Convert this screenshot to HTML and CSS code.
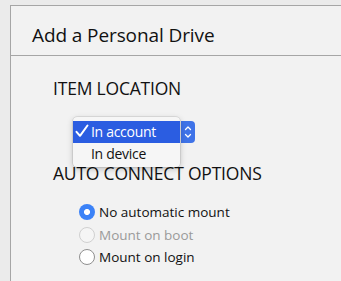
FILE: index.html
```html
<!DOCTYPE html>
<html>
<head>
<meta charset="utf-8">
<link rel="stylesheet" href="styles.css">
</head>
<body>
<div class="panel">
  <div class="header"><h1 class="title">Add a Personal Drive</h1></div>
  <div class="content">
    <div class="section-label">ITEM LOCATION</div>
    <div class="select-row">
      <div class="menu">
        <div class="menu-item selected"><svg class="check" width="14" height="14" viewBox="0 0 14 14"><path d="M1.5 7.8 L5 11.8 L12.5 1.5" fill="none" stroke="#fff" stroke-width="2" stroke-linecap="round" stroke-linejoin="round"/></svg>In account</div>
        <div class="menu-item">In device</div>
      </div>
      <div class="stepper">
        <svg width="14" height="22" viewBox="0 0 14 22"><path d="M4.5 8.5 L7 6 L9.5 8.5 M4.5 13.5 L7 16 L9.5 13.5" fill="none" stroke="#fff" stroke-width="1.3" stroke-linecap="round" stroke-linejoin="round"/></svg>
      </div>
    </div>
    <div class="section-label second">AUTO CONNECT OPTIONS</div>
    <div class="radios">
      <div class="radio-row"><span class="radio checked"></span><span>No automatic mount</span></div>
      <div class="radio-row disabled"><span class="radio"></span><span>Mount on boot</span></div>
      <div class="radio-row"><span class="radio"></span><span>Mount on login</span></div>
    </div>
  </div>
</div>
</body>
</html>
```
FILE: styles.css
```css
html, body { margin: 0; padding: 0; }
body {
  background: #ebebeb;
  padding: 5px 0 0 10px;
  font-family: "Open Sans", "Noto Sans", sans-serif;
  color: #111;
  overflow: hidden;
  height: 281px;
  box-sizing: border-box;
}
.panel {
  background: #f2f2f2;
  border-left: 1px solid #a6a6a6;
  border-top: 1px solid #a6a6a6;
  height: 100%;
}
.header {
  height: 49px;
  border-bottom: 1px solid #a6a6a6;
  padding-left: 21px;
  display: flex;
  align-items: center;
}
.title {
  margin: 0;
  font-size: 19px;
  font-weight: 400;
  letter-spacing: -0.1px;
  padding-top: 9px;
}
.content {
  padding-left: 42px;
  padding-top: 21px;
}
.section-label {
  font-size: 17.5px;
  line-height: 22px;
  letter-spacing: -0.2px;
}
.select-row {
  position: relative;
  height: 63px;
  margin-left: 20px;
}
.menu {
  position: absolute;
  left: 0;
  top: 18px;
  width: 107px;
  background: #f6f6f6;
  border-radius: 4px;
  box-shadow: 0 2px 6px rgba(0,0,0,0.22), 0 0 0 0.5px rgba(0,0,0,0.15);
  padding: 4px 0 2px;
  font-size: 14px;
  letter-spacing: -0.3px;
  z-index: 2;
}
.menu-item {
  height: 22px;
  line-height: 22px;
  padding-left: 18px;
  position: relative;
}
.menu-item.selected {
  background: #2b5de1;
  color: #fff;
}
.check {
  position: absolute;
  left: 2px;
  top: 3px;
}
.stepper {
  position: absolute;
  left: 108px;
  top: 22px;
  width: 14px;
  height: 22px;
  background: #3f73e8;
  border-radius: 0 4px 4px 0;
}
.stepper svg { display: block; }
.radios {
  margin-left: 26px;
  padding-top: 17px;
}
.radio-row {
  display: flex;
  align-items: center;
  height: 22.5px;
  font-size: 13.5px;
  gap: 4px;
}
.radio-row.disabled { color: #9a9a9a; }
.radio {
  width: 16px;
  height: 16px;
  border-radius: 50%;
  border: 1px solid #8f8f8f;
  background: #fff;
  box-sizing: border-box;
  display: inline-block;
  flex: none;
}
.disabled .radio { border-color: #d0d0d0; background: #f5f5f5; }
.radio.checked {
  border: none;
  background: radial-gradient(circle, #fff 0 2.7px, #3b82f7 3.3px);
}
```
